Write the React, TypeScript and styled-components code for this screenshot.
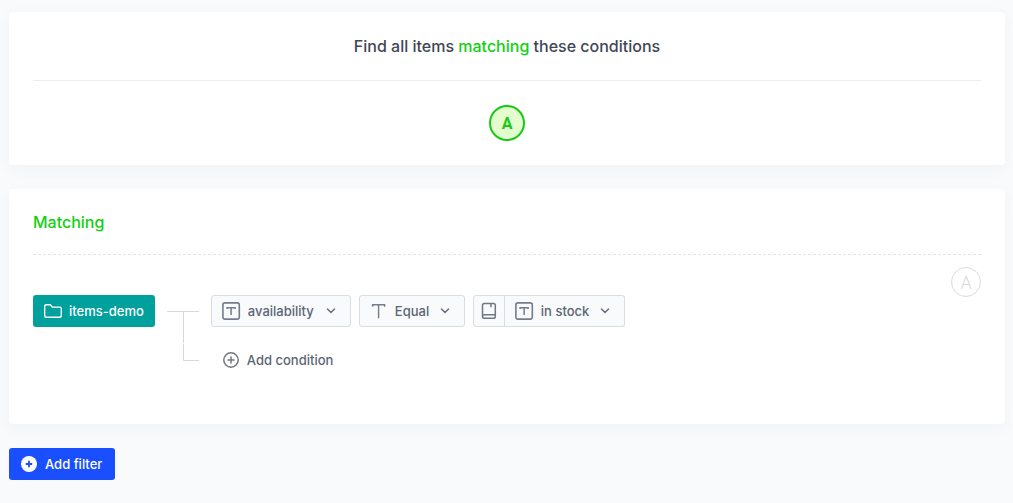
import React from "react";
import styled, { createGlobalStyle } from "styled-components";

const GlobalStyle = createGlobalStyle`
  * { box-sizing: border-box; }
  body {
    margin: 0;
    background: #f8fafc;
    color: #3f4656;
    font-family: Inter, "Liberation Sans", sans-serif;
    font-size: 13px;
    font-weight: 500;
  }
  button, select { font: inherit; color: inherit; }
  svg { display: block; flex: none; }
`;

const Page = styled.main`
  display: flex;
  flex-direction: column;
  gap: 24px;
  padding: 12px 8px 23px 9px;
`;

const Card = styled.section`
  padding: 24px;
  background: #fff;
  border-radius: 4px;
  box-shadow: 0 4px 16px rgba(40, 50, 60, 0.04);
`;

const SummaryTitle = styled.h1`
  margin: 0 0 24px;
  padding-bottom: 24px;
  border-bottom: 1px solid #ebedee;
  font-size: 16px;
  line-height: 20px;
  font-weight: 500;
  text-align: center;
`;

const Highlight = styled.span`
  color: #12cf12;
`;

const Badge = styled.div<{ $active?: boolean }>`
  display: flex;
  flex: none;
  align-items: center;
  justify-content: center;
  width: ${(p) => (p.$active ? 36 : 30)}px;
  height: ${(p) => (p.$active ? 36 : 30)}px;
  margin: ${(p) => (p.$active ? "0 auto" : "12px 0 0")};
  border: ${(p) => (p.$active ? "2px solid #17c917" : "1px solid #d9dcdf")};
  border-radius: 50%;
  background: ${(p) => (p.$active ? "#e4fdcf" : "#fff")};
  color: ${(p) => (p.$active ? "#17c917" : "#d5d8dc")};
  font-family: Roboto, sans-serif;
  font-size: ${(p) => (p.$active ? 16 : 18)}px;
  font-weight: ${(p) => (p.$active ? 700 : 300)};
`;

const FilterTitle = styled.h2`
  margin: 0;
  padding-bottom: 23px;
  color: #12cf12;
  font-size: 16px;
  line-height: 18px;
  font-weight: 500;
`;

const DashedRule = styled.div`
  height: 1px;
  background: repeating-linear-gradient(to right, #e2e4e6 0 3px, transparent 3px 5px);
`;

const FilterBody = styled.div`
  display: flex;
  align-items: flex-start;
  justify-content: space-between;
`;

const Tree = styled.div`
  display: flex;
  align-items: flex-start;
  gap: 12px;
  padding: 40px 0 24px;
`;

const Button = styled.button<{ $tone: "teal" | "blue" | "plain" }>`
  display: flex;
  align-items: center;
  align-self: flex-start;
  gap: ${(p) => (p.$tone === "teal" ? 6 : 8)}px;
  height: 32px;
  padding: ${(p) => ({ teal: "0 11px 0 10px", blue: "0 13px 0 12px", plain: "0 12px" })[p.$tone]};
  border: 0;
  border-radius: 3px;
  background: ${(p) => ({ teal: "#00a09c", blue: "#194fff", plain: "transparent" })[p.$tone]};
  color: ${(p) => (p.$tone === "plain" ? "#5c6573" : "#fff")};
  white-space: nowrap;
  cursor: pointer;
`;

const Conditions = styled.div`
  display: flex;
  flex-direction: column;
  gap: 17px;
`;

const Row = styled.div`
  display: flex;
  gap: 8px;
`;

const Group = styled.div`
  display: flex;
`;

const Field = styled.label<{ $joined?: boolean }>`
  display: flex;
  align-items: center;
  gap: 7px;
  height: 32px;
  padding: 0 14px 0 10px;
  border: 1px solid #d9dde1;
  border-left-width: ${(p) => (p.$joined ? 0 : 1)}px;
  border-radius: ${(p) => (p.$joined ? "0 3px 3px 0" : "3px")};
  background: #f8fafc;
  color: #5c6573;
`;

const Select = styled.select<{ $width: number }>`
  appearance: none;
  width: ${(p) => p.$width}px;
  padding: 0;
  border: 0;
  outline: 0;
  background: transparent;
  cursor: pointer;
`;

const IconButton = styled.button`
  display: flex;
  align-items: center;
  justify-content: center;
  width: 32px;
  height: 32px;
  padding: 0;
  border: 1px solid #d9dde1;
  border-radius: 3px 0 0 3px;
  background: #f8fafc;
  color: #6f7885;
  cursor: pointer;
`;

const FolderIcon = () => (
  <svg width="20" height="16" viewBox="0 0 20 16" fill="none" stroke="currentColor" strokeWidth="1.4" strokeLinejoin="round">
    <path d="M1.7 3.2c0-.9.6-1.5 1.5-1.5h3.6c.5 0 .9.2 1.2.6l1.3 1.8h7.5c.9 0 1.5.6 1.5 1.5v7.2c0 .9-.6 1.5-1.5 1.5H3.2c-.9 0-1.5-.6-1.5-1.5z" />
  </svg>
);

const BoxedTextIcon = () => (
  <svg width="19" height="18" viewBox="0 0 19 18" fill="none" stroke="#747d89">
    <rect x=".9" y=".9" width="16.4" height="16.2" rx="2" strokeWidth="1.6" />
    <path d="M5.1 6.9V5.7h8v1.2M9.1 5.7v7.2" strokeWidth="1.5" />
  </svg>
);

const TextIcon = () => (
  <svg width="18" height="18" viewBox="0 0 18 18" fill="none" stroke="#747d89" strokeWidth="1.4">
    <path d="M2.6 4.8V2.8h12v2M8.6 2.8v13.4" />
  </svg>
);

const BookIcon = () => (
  <svg width="16" height="18" viewBox="0 0 16 18" fill="none" stroke="currentColor" strokeWidth="1.5" strokeLinejoin="round">
    <path d="M1.5 14.2V3.3c0-1.1.7-1.8 1.8-1.8h9.2c1.1 0 1.8.7 1.8 1.8v11.2c0 1.1-.7 1.8-1.8 1.8H3.3c-1.1 0-1.8-.7-1.8-1.8s.7-1.8 1.8-1.8h11M10 1.5v3.7" />
  </svg>
);

const ChevronIcon = () => (
  <svg width="10" height="6" viewBox="0 0 10 6" fill="none" stroke="#66707d" strokeWidth="1.5" strokeLinecap="round" strokeLinejoin="round">
    <path d="M1.5 1 5 4.5 8.5 1" />
  </svg>
);

const PlusCircleIcon = () => (
  <svg width="16" height="16" viewBox="0 0 16 16" fill="none" stroke="#6f7885" strokeWidth="1.5">
    <circle cx="8" cy="8" r="7.2" />
    <path d="M8 5v6M5 8h6" strokeLinecap="round" />
  </svg>
);

const PlusDiscIcon = () => (
  <svg width="16" height="16" viewBox="0 0 16 16" fill="none">
    <circle cx="8" cy="8" r="8" fill="#fff" />
    <path d="M8 4.8v6.4M4.8 8h6.4" stroke="#194fff" strokeWidth="1.8" />
  </svg>
);

const Branches = () => (
  <svg width="32" height="81" viewBox="0 0 32 81" fill="none" stroke="#d6d8db" aria-hidden="true">
    <path d="M0 16.5h32M16.5 17v31M16.5 49v16.5H32" />
  </svg>
);

type PickerProps = {
  label: string;
  value: string;
  width: number;
  icon: React.ReactNode;
  joined?: boolean;
};

function Picker({ label, value, width, icon, joined }: PickerProps) {
  return (
    <Field $joined={joined}>
      {icon}
      <Select $width={width} aria-label={label}>
        <option>{value}</option>
      </Select>
      <ChevronIcon />
    </Field>
  );
}

export default function App() {
  return (
    <>
      <GlobalStyle />
      <Page>
        <Card>
          <SummaryTitle>
            Find all items <Highlight>matching</Highlight> these conditions
          </SummaryTitle>
          <Badge $active>A</Badge>
        </Card>
        <Card>
          <FilterTitle>Matching</FilterTitle>
          <DashedRule />
          <FilterBody>
            <Tree>
              <Button type="button" $tone="teal">
                <FolderIcon />
                items-demo
              </Button>
              <Branches />
              <Conditions>
                <Row>
                  <Picker label="Attribute" value="availability" width={71} icon={<BoxedTextIcon />} />
                  <Picker label="Operator" value="Equal" width={38} icon={<TextIcon />} />
                  <Group>
                    <IconButton type="button" aria-label="Value source">
                      <BookIcon />
                    </IconButton>
                    <Picker label="Value" value="in stock" width={52} icon={<BoxedTextIcon />} joined />
                  </Group>
                </Row>
                <Button type="button" $tone="plain">
                  <PlusCircleIcon />
                  Add condition
                </Button>
              </Conditions>
            </Tree>
            <Badge>A</Badge>
          </FilterBody>
        </Card>
        <Button type="button" $tone="blue">
          <PlusDiscIcon />
          Add filter
        </Button>
      </Page>
    </>
  );
}
